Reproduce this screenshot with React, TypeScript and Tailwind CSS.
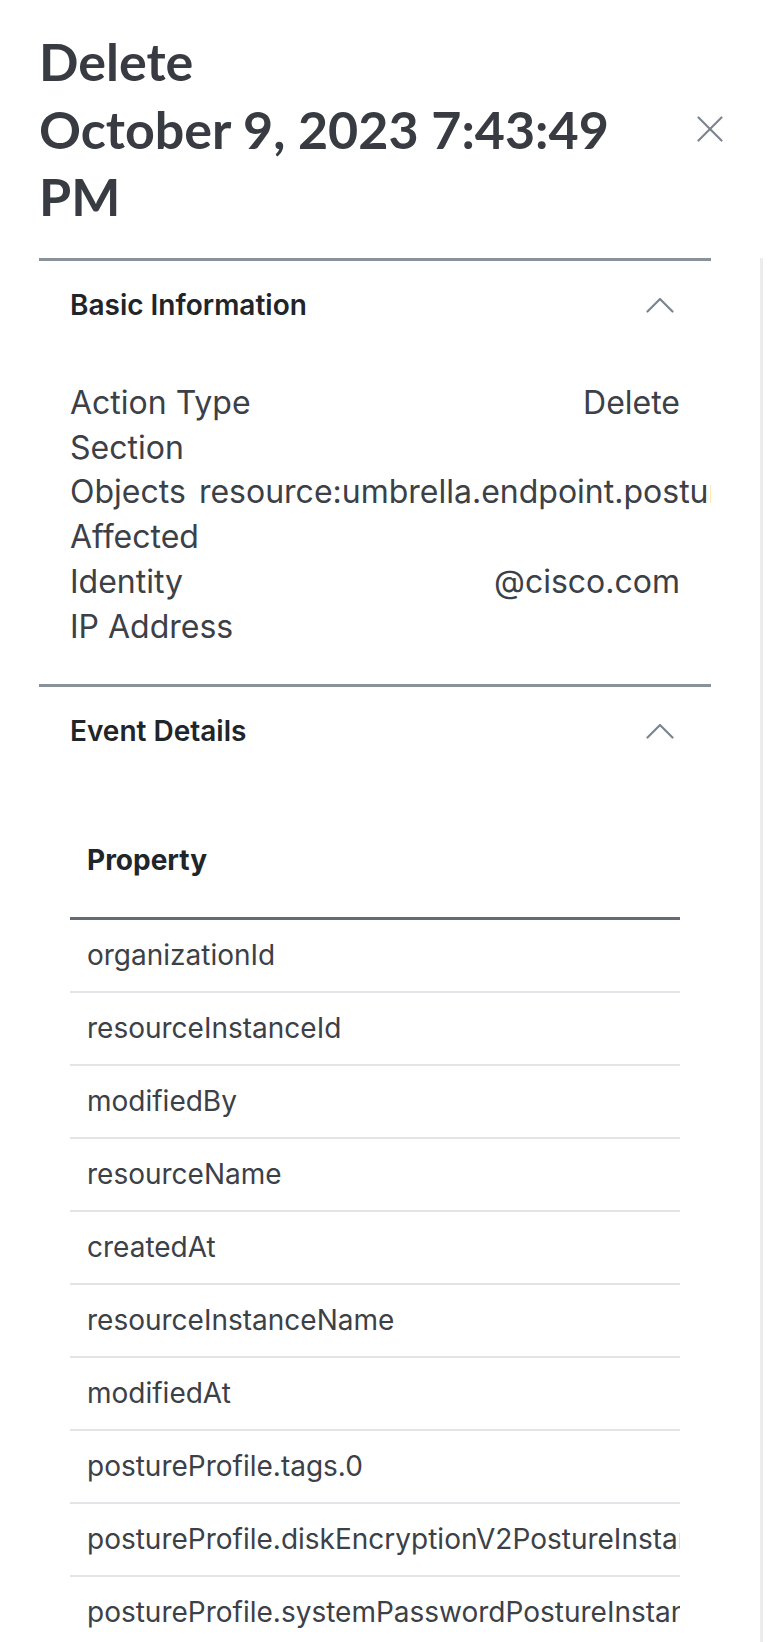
import React from 'react'

const basicInfo: { label: string; value: string }[] = [
  { label: 'Action Type', value: 'Delete' },
  { label: 'Section', value: '' },
  { label: 'Objects Affected', value: 'resource:umbrella.endpoint.postureProfile' },
  { label: 'Identity', value: '@cisco.com' },
  { label: 'IP Address', value: '' },
]

const properties = [
  'organizationId',
  'resourceInstanceId',
  'modifiedBy',
  'resourceName',
  'createdAt',
  'resourceInstanceName',
  'modifiedAt',
  'postureProfile.tags.0',
  'postureProfile.diskEncryptionV2PostureInstanceId',
  'postureProfile.systemPasswordPostureInstanceId',
]

function ChevronUp() {
  return (
    <svg aria-hidden width="28" height="16" viewBox="0 0 28 16" fill="none" stroke="#7b858f" strokeWidth="2.2" strokeLinecap="round" strokeLinejoin="round">
      <path d="M1.5 14.5 14 2l12.5 12.5" />
    </svg>
  )
}

function SectionHeader({ title }: { title: string }) {
  return (
    <div className="flex items-center justify-between h-[88px] pl-[31px] pr-[37px]">
      <h2 className="text-[28px] leading-[34px] font-semibold text-[#212529]">{title}</h2>
      <ChevronUp />
    </div>
  )
}

export default function App() {
  return (
    <div className="w-[768px] h-[1642px] overflow-hidden bg-white font-['Inter',sans-serif]">
      <header className="flex items-center pl-[39px] pr-[45px] pt-[28px] pb-[27px]">
        <h1 className="flex-1 pr-[40px] font-['Lato',sans-serif] text-[52px] leading-[1.3] font-bold text-[#383c42]">
          <span className="block">Delete</span>
          <span className="block">October 9, 2023 7:43:49 PM</span>
        </h1>
        <button type="button" aria-label="Close" className="w-[26px] h-[26px] flex items-center justify-center">
          <svg aria-hidden width="26" height="26" viewBox="0 0 26 26" fill="none" stroke="#7b848e" strokeWidth="2.2" strokeLinecap="round">
            <path d="M1.5 1.5 24.5 24.5" />
            <path d="M24.5 1.5 1.5 24.5" />
          </svg>
        </button>
      </header>

      <div className="flex">
        <div className="ml-[39px] w-[672px] shrink-0">
          <section className="border-t-[3px] border-[#8a9299] overflow-hidden">
            <SectionHeader title="Basic Information" />
            <div className="px-[31px] pt-[32px] pb-[34px] text-[32px] leading-[1.4] text-[#3c4047]">
              {basicInfo.map((row) => (
                <div key={row.label} className="flex justify-between">
                  <span>{row.label}</span>
                  <span className="shrink-0 whitespace-nowrap">{row.value}</span>
                </div>
              ))}
            </div>
          </section>

          <section className="border-t-[3px] border-[#8a9299] overflow-hidden">
            <SectionHeader title="Event Details" />
            <div className="mx-[31px] mt-[28px] overflow-hidden">
              <div className="pl-[17px] py-[36px] text-[28px] leading-[42px] font-bold text-[#212529] border-b-[3px] border-[#646b75]">
                Property
              </div>
              {properties.map((p) => (
                <div
                  key={p}
                  className="h-[73px] flex items-center pl-[17px] border-b-2 border-[#e3e3e8] text-[28px] leading-[42px] text-[#3c4047] whitespace-nowrap"
                >
                  {p}
                </div>
              ))}
            </div>
          </section>
        </div>
        <div className="ml-[49px] w-[3px] bg-[#ececec]" />
      </div>
    </div>
  )
}
